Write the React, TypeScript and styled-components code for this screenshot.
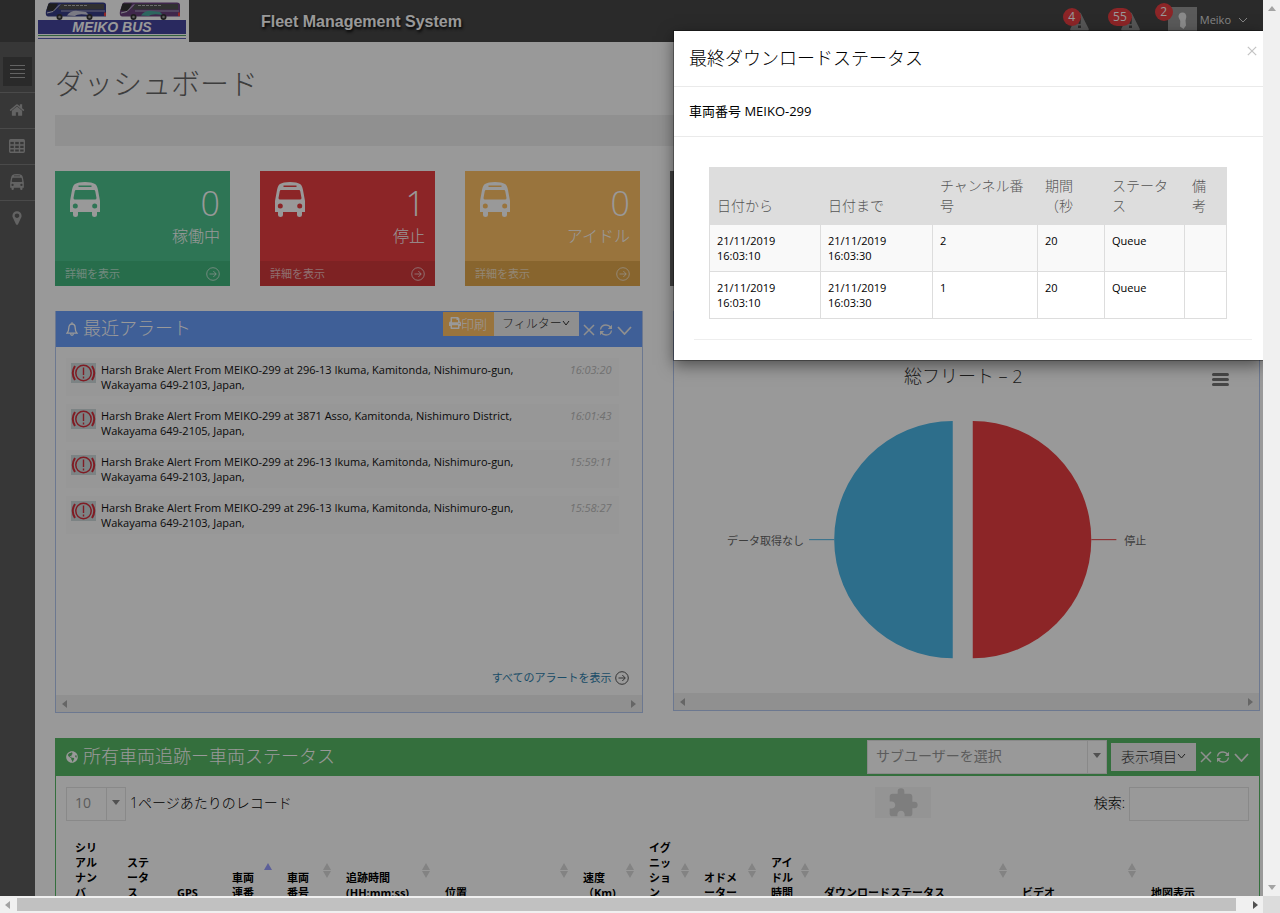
import React from "react";
import styled, { createGlobalStyle } from "styled-components";
import { FaGlobeAmericas, FaPrint } from "react-icons/fa";
import { MdExtension } from "react-icons/md";

const GlobalStyle = createGlobalStyle`
  * { box-sizing: border-box; }
  body {
    margin: 0;
    background: #fff;
    color: #000;
    font-family: "Open Sans", "Noto Sans CJK JP", sans-serif;
    font-size: 11px;
    line-height: 15px;
  }
  button, input, select { font-family: inherit; margin: 0; border-radius: 0; }
  svg { display: block; flex: none; }
  a { text-decoration: none; }
`;

/* ---------- window frame ---------- */

const Frame = styled.div`
  display: grid;
  grid-template: minmax(0, 1fr) 17px / minmax(0, 1fr) 17px;
  height: 100vh;
`;

const Viewport = styled.div`
  position: relative;
  overflow: hidden;
`;

const Track = styled.div<{ $vertical?: boolean }>`
  display: flex;
  flex-direction: ${(p) => (p.$vertical ? "column" : "row")};
  justify-content: space-between;
  align-items: center;
  padding: ${(p) => (p.$vertical ? "6px 0" : "0 5px")};
  background: #f0f0f0;
`;

const Thumb = styled.div`
  flex: 1;
  height: 13px;
  margin: 0 17px 0 7px;
  background: #c1c1c1;
`;

const Corner = styled.div`
  background: #dcdcdc;
`;

const shapes = {
  up: "M0 5L4 0L8 5Z",
  down: "M0 0L4 5L8 0Z",
  left: "M5 0L0 4L5 8Z",
  right: "M0 0L5 4L0 8Z",
};

function Arrow({ dir, color }: { dir: keyof typeof shapes; color: string }) {
  const wide = dir === "up" || dir === "down";
  return (
    <svg width={wide ? 8 : 5} height={wide ? 5 : 8} fill={color} aria-hidden="true">
      <path d={shapes[dir]} />
    </svg>
  );
}

/* ---------- top bar ---------- */

const TopBar = styled.header`
  display: flex;
  height: 42px;
  padding-left: 35px;
  background: #464646;
`;

const LogoBox = styled.div`
  width: 154px;
  height: 42px;
  background: #fff;
`;

const AppName = styled.div`
  margin-left: 72px;
  color: #fff;
  font: bold 16px/44px "Liberation Sans", Arial, sans-serif;
  text-shadow: 1px 2px 3px #000;
`;

const UserTools = styled.div`
  display: flex;
  align-items: flex-start;
  margin-left: auto;
  padding-right: 15px;
`;

const Notice = styled.a<{ $gap: number }>`
  position: relative;
  margin: 12px ${(p) => p.$gap}px 0 0;
`;

const Badge = styled.span<{ $user?: boolean }>`
  position: absolute;
  top: -4px;
  ${(p) => (p.$user ? "left: -13px;" : "right: 8px;")}
  min-width: 18px;
  padding: 0 5px;
  border-radius: 9px;
  background: #e93e41;
  color: #fff;
  font-size: 12px;
  line-height: 18px;
  text-align: center;
`;

const User = styled.a`
  position: relative;
  display: flex;
  align-items: center;
  gap: 3px;
  margin-top: 7px;
  height: 25px;
  color: #ddd;
  font-size: 11px;
`;

const UserName = styled.span`
  margin-right: 4px;
`;

/* ---------- sidebar ---------- */

const Body = styled.div`
  display: flex;
  align-items: stretch;
`;

const SideBar = styled.nav`
  flex: none;
  width: 35px;
  min-height: 900px;
  padding-top: 15px;
  background: #5d5d5d;
`;

const Toggle = styled.button`
  display: flex;
  align-items: center;
  justify-content: center;
  width: 29px;
  height: 29px;
  margin: 0 3px 6px;
  padding: 0;
  border: 0;
  background: #464646;
`;

const SideLink = styled.a`
  display: flex;
  align-items: center;
  justify-content: center;
  height: 36px;
  padding: 0 1px 1px 0;
  border-top: 1px solid #7c7c7c;
  color: #a5a5a5;
`;

/* ---------- content ---------- */

const Main = styled.main`
  flex: 1;
  min-width: 0;
  padding: 22px 3px 0 20px;
`;

const PageTitle = styled.h1`
  margin: 0 0 11px;
  color: #666;
  font-size: 29px;
  font-weight: 300;
  line-height: 40px;
`;

const Breadcrumb = styled.div`
  height: 31px;
  margin-bottom: 25px;
  background: #f1f1f1;
`;

const Stats = styled.section`
  display: grid;
  grid-template-columns: repeat(4, 175px);
  gap: 30px;
  margin-bottom: 25px;
`;

const StatCard = styled.article<{ $color: string }>`
  display: flex;
  flex-direction: column;
  height: 115px;
  background: ${(p) => p.$color};
  color: #fff;
`;

const StatTop = styled.div`
  display: flex;
  flex: 1;
  justify-content: space-between;
  padding: 11px 10px 0 15px;
`;

const StatText = styled.div`
  text-align: right;
  font-size: 16px;
  font-weight: 300;
  line-height: 22px;
`;

const StatValue = styled.div`
  padding: 1px 0 2px;
  font-size: 34px;
  line-height: 40px;
`;

const StatLink = styled.a<{ $color: string }>`
  display: flex;
  align-items: center;
  justify-content: space-between;
  height: 25px;
  padding: 0 10px;
  background: ${(p) => p.$color};
  color: rgba(255, 255, 255, 0.65);
`;

const Panels = styled.div`
  display: grid;
  grid-template-columns: 1fr 1fr;
  align-items: start;
  gap: 30px;
  margin-bottom: 25px;
`;

const Panel = styled.section<{ $color: string }>`
  display: flex;
  flex-direction: column;
  border: 1px solid ${(p) => p.$color};
  border-top: 0;
`;

const PanelHead = styled.header<{ $color: string; $tall?: boolean }>`
  display: flex;
  align-items: center;
  height: ${(p) => (p.$tall ? 38 : 36)}px;
  padding: 0 10px;
  background: ${(p) => p.$color};
  color: #fff;
`;

const PanelTitle = styled.h2`
  flex: 1;
  margin: 0 0 0 5px;
  padding-bottom: 2px;
  font-size: 18px;
  font-weight: 300;
  line-height: 26px;
`;

const HeadButton = styled.button<{ $amber?: boolean; $large?: boolean }>`
  display: flex;
  align-items: center;
  justify-content: center;
  align-self: ${(p) => (p.$large ? "center" : "flex-start")};
  width: ${(p) => (p.$amber ? 51 : 85)}px;
  height: ${(p) => (p.$large ? 28 : 24)}px;
  margin-top: ${(p) => (p.$large ? 0 : 1)}px;
  padding: 0 0 2px;
  border: 0;
  background: ${(p) => (p.$amber ? "#ffc166" : "#eee")};
  color: ${(p) => (p.$amber ? "#fff" : "#333")};
  font-size: ${(p) => (p.$large ? 14 : p.$amber ? 13 : 12)}px;
  font-weight: 300;
`;

const Tools = styled.div<{ $low?: boolean }>`
  display: flex;
  align-items: center;
  gap: 4px;
  margin: ${(p) => (p.$low ? 2 : 0)}px 0 0 4px;
`;

const ToolButton = styled.button`
  padding: 0;
  border: 0;
  background: none;
  color: #eee;
`;

const Strip = styled.div`
  display: flex;
  align-items: center;
  justify-content: space-between;
  height: 17px;
  padding: 0 6px;
  background: #f1f1f1;
`;

const AlertList = styled.ul`
  display: grid;
  gap: 8px;
  margin: 0;
  padding: 11px 23px 0 10px;
  height: 308px;
  align-content: start;
  list-style: none;
`;

const AlertRow = styled.li`
  display: grid;
  grid-template-columns: 25px minmax(0, 425px) 1fr;
  column-gap: 5px;
  padding: 4px 7px 4px 5px;
  background: #fcfcfc;
`;

const Message = styled.div`
  color: #111;
`;

const Time = styled.time`
  color: #bbb;
  font-style: italic;
  text-align: right;
`;

const MoreLink = styled.a`
  display: flex;
  align-items: center;
  justify-content: flex-end;
  gap: 3px;
  height: 40px;
  padding: 5px 13px 0 0;
  color: #2f81ad;
`;

const Chart = styled.svg`
  width: 100%;
  font-family: "Open Sans", "Noto Sans CJK JP", sans-serif;
`;

/* ---------- fleet table ---------- */

const SelectBox = styled.div<{ $width: number }>`
  position: relative;
  width: ${(p) => p.$width}px;
  height: 34px;
  border: 1px solid #e5e5e5;
  background: #fff;
`;

const Select = styled.select`
  appearance: none;
  width: 100%;
  height: 32px;
  padding: 0 8px 3px;
  border: 0;
  background: none;
  color: #999;
  font-size: 14px;
`;

const SelectArrow = styled.span`
  position: absolute;
  inset: 0 0 0 auto;
  display: flex;
  justify-content: center;
  width: 19px;
  padding-top: 12px;
  border-left: 1px solid #e5e5e5;
  pointer-events: none;
`;

const Controls = styled.div`
  display: flex;
  align-items: flex-start;
  justify-content: space-between;
  padding: 11px 10px;
  font-size: 14px;
  font-weight: 300;
`;

const Field = styled.div`
  display: flex;
  align-items: center;
  gap: 4px;

  label { padding-bottom: 4px; }
`;

const Plugin = styled.div`
  display: flex;
  align-items: center;
  justify-content: center;
  width: 56px;
  height: 31px;
  margin: 0 163px 0 auto;
  background: #f7f7f7;
  color: #d2d2d2;
`;

const SearchInput = styled.input`
  width: 120px;
  height: 34px;
  border: 1px solid #e5e5e5;
  background: #fff;
`;

const FleetTable = styled.table`
  width: calc(100% - 19px);
  margin-left: 9px;
  border-collapse: collapse;
  table-layout: fixed;
`;

const FleetHead = styled.th<{ $width: number }>`
  position: relative;
  width: ${(p) => p.$width}px;
  padding: 8px 0 8px 10px;
  text-align: left;
  vertical-align: bottom;
  font-weight: 700;
  white-space: nowrap;
`;

const SortMark = styled.svg`
  position: absolute;
  top: calc(50% - 7px);
  right: 5px;
`;

/* ---------- modal ---------- */

const Overlay = styled.div`
  position: absolute;
  inset: 0;
  background: rgba(0, 0, 0, 0.4);
`;

const Modal = styled.div`
  position: absolute;
  top: 31px;
  right: 0;
  width: 589px;
  background: #fff;
  box-shadow: 0 5px 15px rgba(0, 0, 0, 0.5), 0 0 0 1px rgba(0, 0, 0, 0.3);
`;

const ModalHead = styled.header`
  display: flex;
  align-items: flex-start;
  justify-content: space-between;
  height: 56px;
  padding: 14px 6px 0 15px;
  border-bottom: 1px solid #eaeaea;
`;

const ModalTitle = styled.h3`
  margin: 0;
  font-size: 18px;
  font-weight: 300;
  line-height: 26px;
`;

const Close = styled.button`
  padding: 1px 0 0;
  border: 0;
  background: none;
`;

const Vehicle = styled.div`
  padding: 14px 15px 15px;
  border-bottom: 1px solid #eaeaea;
  font-size: 13px;
  line-height: 20px;
`;

const ModalBody = styled.div`
  padding: 30px 11px 20px 20px;
`;

const LogTable = styled.table`
  width: 518px;
  margin: 0 0 20px 15px;
  border-collapse: collapse;
  table-layout: fixed;

  th, td {
    padding: 8px 8px 8px 7px;
    border: 1px solid #ddd;
    text-align: left;
    vertical-align: top;
  }
  th {
    background: #ddd;
    color: #555;
    font-size: 14px;
    font-weight: 300;
    line-height: 20px;
    vertical-align: bottom;
  }
  tbody tr:first-child { background: #f9f9f9; }
`;

const Rule = styled.hr`
  margin: 0;
  border: 0;
  border-top: 1px solid #eee;
`;

/* ---------- icons ---------- */

function Bus({ width, height }: { width: number; height: number }) {
  return (
    <svg width={width} height={height} viewBox="0 0 30 35" fill="currentColor" fillRule="evenodd" aria-hidden="true">
      <path d="M5 2Q8 0 15 0T25 2Q27 3 28 8L30 19V30H27V33Q27 35 24.500 35T22 33V30H8V33Q8 35 5.500 35T3 33V30H0V19L2 8Q3 3 5 2ZM8.500 3.500V5H21.500V3.500ZM6 8Q5 8 4.800 9L3.500 16Q3.500 17.500 5 17.500H25Q26.500 17.500 26.500 16L25.200 9Q25 8 24 8ZM5.300 21.500A2.500 2.500 0 1 0 5.300 26.500A2.500 2.500 0 1 0 5.300 21.500ZM24.700 21.500A2.500 2.500 0 1 0 24.700 26.500A2.500 2.500 0 1 0 24.700 21.500Z" />
    </svg>
  );
}

const Home = () => (
  <svg width="16" height="16" viewBox="0 0 1792 1792" fill="currentColor" aria-hidden="true">
    <path d="M1472 992v480q0 26-19 45t-45 19h-384v-384h-256v384h-384q-26 0-45-19t-19-45v-480q0-1 .5-3t.5-3l575-474 575 474q1 2 1 6zm223-69l-62 74q-8 9-21 11h-3q-13 0-21-7l-692-577-692 577q-12 8-24 7-13-2-21-11l-62-74q-8-10-7-23.500t11-21.500l719-599q32-26 76-26t76 26l244 204v-195q0-14 9-23t23-9h192q14 0 23 9t9 23v408l219 182q10 8 11 21.500t-7 23.500z" />
  </svg>
);

const Grid = () => (
  <svg width="16" height="14" viewBox="0 0 16 14" fill="none" stroke="currentColor" aria-hidden="true">
    <rect x="0.700" y="0.700" width="14.600" height="12.600" rx="1" strokeWidth="1.400" />
    <path d="M1 1.700H15" strokeWidth="2.400" />
    <path d="M1 6H15M1 9.700H15M5.500 2V13M10.500 2V13" strokeWidth="1.400" />
  </svg>
);

const Marker = () => (
  <svg width="16" height="16" viewBox="0 0 1792 1792" fill="currentColor" aria-hidden="true">
    <path d="M1152 640q0-106-75-181t-181-75-181 75-75 181 75 181 181 75 181-75 75-181zm256 0q0 109-33 179l-364 774q-16 33-47.500 52t-67.500 19-67.500-19-46.500-52l-365-774q-33-70-33-179 0-212 150-362t362-150 362 150 150 362z" />
  </svg>
);

const Warning = () => (
  <svg width="19" height="19" viewBox="0 0 19 19" aria-hidden="true">
    <path d="M9.500 0.500Q10.500 0.500 11 1.500L18.800 17Q19 18.500 18 18.500H1Q0 18.500 0.200 17L8 1.500Q8.500 0.500 9.500 0.500Z" fill="#8f8f8f" />
    <path d="M8 6H11L10.500 12H8.500ZM8 13.500H11V16H8Z" fill="#464646" />
  </svg>
);

const Avatar = () => (
  <svg width="29" height="25" viewBox="0 0 29 25" aria-hidden="true">
    <rect width="29" height="25" fill="#969696" />
    <path d="M14.500 5.500C17 5.500 18.500 7.500 18.300 10L17.500 13.500L18 18.500L15.500 22L12 19.500L12.300 14L10.500 10C10.300 7.500 12 5.500 14.500 5.500Z" fill="#e6e6e6" />
  </svg>
);

function CircleArrow({ color = "currentColor" }: { color?: string }) {
  return (
    <svg width="14" height="14" viewBox="0 0 14 14" fill="none" stroke={color} aria-hidden="true">
      <circle cx="7" cy="7" r="6.300" />
      <path d="M3.500 7H10M7.300 4L10.300 7L7.300 10" />
    </svg>
  );
}

function Chevron({ w, h, sw = 1.5 }: { w: number; h: number; sw?: number }) {
  return (
    <svg width={w} height={h} viewBox={`0 0 ${w} ${h}`} fill="none" stroke="currentColor" strokeWidth={sw} aria-hidden="true">
      <path d={`M1 1L${w / 2} ${h - 1}L${w - 1} 1`} />
    </svg>
  );
}

function Cross({ size, color = "currentColor" }: { size: number; color?: string }) {
  return (
    <svg width={size} height={size} viewBox="0 0 12 12" fill="none" stroke={color} strokeWidth="1.500" aria-hidden="true">
      <path d="M1 1L11 11M11 1L1 11" />
    </svg>
  );
}

const Refresh = () => (
  <svg width="14" height="12" viewBox="0 0 14 12" fill="none" stroke="currentColor" strokeWidth="1.300" aria-hidden="true">
    <path d="M1.500 5.500C2 2.500 4 1 7 1C9 1 10.500 1.700 11.800 3.500M12.500 6.500C12 9.500 10 11 7 11C5 11 3.500 10.300 2.200 8.500" />
    <path d="M13 0.800V5H8.800ZM1 11.200V7H5.200Z" fill="currentColor" stroke="none" />
  </svg>
);

const Bell = () => (
  <svg width="12" height="14" viewBox="0 0 12 14" fill="none" stroke="currentColor" strokeWidth="1.300" aria-hidden="true">
    <path d="M1 11.200C2.500 9.500 2.800 8 2.800 6C2.800 3.500 4 2 6 2S9.200 3.500 9.200 6C9.200 8 9.500 9.500 11 11.200ZM6 0.300V2" />
    <path d="M4.500 11.500Q4.800 13.300 6 13.300T7.500 11.500" />
  </svg>
);

const Brake = () => (
  <svg width="25" height="21" viewBox="0 -1 25 21" fill="none" stroke="#d5303c" aria-hidden="true">
    <rect width="25" height="20" fill="#cfdadd" stroke="none" />
    <circle cx="12.500" cy="10" r="7.700" strokeWidth="1.500" />
    <path d="M12.500 4.500V12M12.500 13.500V15.500" strokeWidth="1.400" />
    <path d="M4 3Q-0.500 10 4 17M21 3Q25.500 10 21 17" strokeWidth="2" />
  </svg>
);

function LogoBus({ x, body, accent }: { x: number; body: string; accent: string }) {
  return (
    <g transform={`translate(${x} 2)`}>
      <path d="M5 0.500H58Q61 0.500 61 3V14.500H3Q0 14 1 9L3 3Q4 0.500 5 0.500Z" fill={body} />
      <path d="M3.500 1.500L1.500 8.500L9 9L13 1.500Z" fill="#333" />
      <path d="M16 2H59V7.500H13Z" fill="#525252" />
      <path d="M19 3.500H42" stroke="#b5b5b5" strokeDasharray="3 1" />
      <path d="M2 11L8 9.500L15 2.500" fill="none" stroke="#d8d8e2" />
      <path d="M16 9H60" stroke="#a5a5c0" />
      <path d="M22 13.500Q26 8 33 9L41 10L44 13Q33 11 30 14Z" fill={accent} />
      <circle cx="14.500" cy="15" r="3" fill="#333" />
      <circle cx="44.500" cy="15" r="3" fill="#333" />
      <circle cx="14.500" cy="15" r="1.300" fill="#999" />
      <circle cx="44.500" cy="15" r="1.300" fill="#999" />
      <path d="M59 10.500H61V14H59Z" fill="#f04040" />
    </g>
  );
}

const Logo = () => (
  <svg width="154" height="42" viewBox="0 0 154 42" role="img" aria-label="Meiko Bus">
    <LogoBus x={10} body="#363c88" accent="#ccd" />
    <LogoBus x={84} body="#6a417e" accent="#4bab9e" />
    <rect x="3" y="20" width="148" height="14" fill="#45459e" />
    <text x="77" y="32" textAnchor="middle" fill="#fff" fontFamily='"Liberation Sans", sans-serif' fontSize="14" fontWeight="bold" fontStyle="italic">MEIKO BUS</text>
    <path d="M3 35.500H151" stroke="#55a568" />
    <path d="M3 38.500H151" stroke="#5c5cb4" />
  </svg>
);

/* ---------- data ---------- */

const stats = [
  { value: "0", label: "稼働中", color: "#4dc38e", foot: "#41b67d" },
  { value: "1", label: "停止", color: "#e93e41", foot: "#d2393b" },
  { value: "0", label: "アイドル", color: "#ffc166", foot: "#e3a84d" },
];

const alerts = [
  { place: "296-13 Ikuma, Kamitonda, Nishimuro-gun, Wakayama 649-2103, Japan,", time: "16:03:20" },
  { place: "3871 Asso, Kamitonda, Nishimuro District, Wakayama 649-2105, Japan,", time: "16:01:43" },
  { place: "296-13 Ikuma, Kamitonda, Nishimuro-gun, Wakayama 649-2103, Japan,", time: "15:59:11" },
  { place: "296-13 Ikuma, Kamitonda, Nishimuro-gun, Wakayama 649-2103, Japan,", time: "15:58:27" },
];

type Sort = "none" | "asc" | "both";

const columns: { lines: string[]; width: number; sort: Sort }[] = [
  { lines: ["シリ", "アル", "ナン", "バ"], width: 52, sort: "none" },
  { lines: ["ステ", "ータ", "ス"], width: 50, sort: "none" },
  { lines: ["GPS"], width: 55, sort: "none" },
  { lines: ["車両", "連番"], width: 55, sort: "asc" },
  { lines: ["車両", "番号"], width: 59, sort: "both" },
  { lines: ["追跡時間", "(HH:mm:ss)"], width: 99, sort: "both" },
  { lines: ["位置"], width: 138, sort: "both" },
  { lines: ["速度", "（Km)"], width: 66, sort: "both" },
  { lines: ["イグ", "ニッ", "ショ", "ン"], width: 55, sort: "both" },
  { lines: ["オドメ", "ーター"], width: 67, sort: "both" },
  { lines: ["アイ", "ドル", "時間"], width: 53, sort: "both" },
  { lines: ["ダウンロードステータス"], width: 198, sort: "both" },
  { lines: ["ビデオ"], width: 129, sort: "both" },
  { lines: ["地図表示"], width: 108, sort: "none" },
];

const logColumns = [
  { label: "日付から", width: 111 },
  { label: "日付まで", width: 112 },
  { label: "チャンネル番号", width: 105 },
  { label: "期間（秒", width: 67 },
  { label: "ステータス", width: 80 },
  { label: "備考", width: 42 },
];

const logRows = [
  ["21/11/2019 16:03:10", "21/11/2019 16:03:30", "2", "20", "Queue", ""],
  ["21/11/2019 16:03:10", "21/11/2019 16:03:30", "1", "20", "Queue", ""],
];

/* ---------- parts ---------- */

function PanelTools({ low }: { low?: boolean }) {
  return (
    <Tools $low={low}>
      <ToolButton aria-label="閉じる"><Cross size={12} /></ToolButton>
      <ToolButton aria-label="更新"><Refresh /></ToolButton>
      <ToolButton aria-label="折りたたむ"><Chevron w={15} h={9} sw={1.8} /></ToolButton>
    </Tools>
  );
}

function ScrollStrip() {
  return (
    <Strip>
      <Arrow dir="left" color="#aaa" />
      <Arrow dir="right" color="#aaa" />
    </Strip>
  );
}

function FleetChart() {
  return (
    <Chart viewBox="0 -1 585 346">
      <text x="289" y="35" textAnchor="middle" fontSize="18" fontWeight="300" fill="#333">総フリート – 2</text>
      <path d="M539 26.500H553M539 31.500H553M539 36.500H553" stroke="#777" strokeWidth="3" strokeLinecap="round" />
      <path d="M278.500 73A118.500 118.500 0 0 0 278.500 310Z" fill="#4bb7e8" />
      <path d="M298.500 73A118.500 118.500 0 0 1 298.500 310Z" fill="#e93e41" />
      <path d="M135 191.500H160" stroke="#4bb7e8" />
      <path d="M417 191.500H442" stroke="#e93e41" />
      <text x="130" y="197" textAnchor="end" fontSize="11" fill="#666">データ取得なし</text>
      <text x="450" y="197" fontSize="11" fill="#666">停止</text>
    </Chart>
  );
}

export default function App() {
  return (
    <>
      <GlobalStyle />
      <Frame>
        <Viewport>
          <TopBar>
            <LogoBox><Logo /></LogoBox>
            <AppName>Fleet Management System</AppName>
            <UserTools>
              <Notice href="#alerts" $gap={32}><Warning /><Badge>4</Badge></Notice>
              <Notice href="#warnings" $gap={28}><Warning /><Badge>55</Badge></Notice>
              <User href="#user">
                <Avatar />
                <Badge $user>2</Badge>
                <UserName>Meiko</UserName>
                <Chevron w={10} h={6} sw={1} />
              </User>
            </UserTools>
          </TopBar>

          <Body>
            <SideBar>
              <Toggle aria-label="メニュー">
                <svg width="15" height="13" stroke="#a5a5a5" aria-hidden="true">
                  <path d="M0 0.500H15M0 4.500H15M0 8.500H15M0 12.500H15" />
                </svg>
              </Toggle>
              <SideLink href="#home" aria-label="ホーム"><Home /></SideLink>
              <SideLink href="#list" aria-label="一覧"><Grid /></SideLink>
              <SideLink href="#bus" aria-label="車両"><Bus width={14} height={16} /></SideLink>
              <SideLink href="#map" aria-label="地図"><Marker /></SideLink>
            </SideBar>

            <Main>
              <PageTitle>ダッシュボード</PageTitle>
              <Breadcrumb />

              <Stats>
                {stats.map((s) => (
                  <StatCard key={s.label} $color={s.color}>
                    <StatTop>
                      <Bus width={30} height={35} />
                      <StatText>
                        <StatValue>{s.value}</StatValue>
                        {s.label}
                      </StatText>
                    </StatTop>
                    <StatLink href="#detail" $color={s.foot}>
                      詳細を表示
                      <CircleArrow />
                    </StatLink>
                  </StatCard>
                ))}
                <StatCard $color="#6d6d6d" />
              </Stats>

              <Panels>
                <Panel $color="#b4c8f0">
                  <PanelHead $color="#699efc">
                    <Bell />
                    <PanelTitle>最近アラート</PanelTitle>
                    <HeadButton $amber><FaPrint size={12} />印刷</HeadButton>
                    <HeadButton>フィルター<Chevron w={8} h={6} sw={1} /></HeadButton>
                    <PanelTools low />
                  </PanelHead>
                  <AlertList>
                    {alerts.map((a) => (
                      <AlertRow key={a.time}>
                        <Brake />
                        <Message>Harsh Brake Alert From MEIKO-299 at {a.place}</Message>
                        <Time>{a.time}</Time>
                      </AlertRow>
                    ))}
                  </AlertList>
                  <MoreLink href="#all">
                    すべてのアラートを表示
                    <CircleArrow color="#555" />
                  </MoreLink>
                  <ScrollStrip />
                </Panel>

                <Panel $color="#b4c8f0">
                  <PanelHead $color="#699efc" />
                  <FleetChart />
                  <ScrollStrip />
                </Panel>
              </Panels>

              <Panel $color="#58b966">
                <PanelHead $color="#58b966" $tall>
                  <FaGlobeAmericas size={12} />
                  <PanelTitle>所有車両追跡ー車両ステータス</PanelTitle>
                  <SelectBox $width={240}>
                    <Select aria-label="サブユーザー">
                      <option>サブユーザーを選択</option>
                    </Select>
                    <SelectArrow><Arrow dir="down" color="#888" /></SelectArrow>
                  </SelectBox>
                  <Tools>
                    <HeadButton $large>表示項目<Chevron w={9} h={6} sw={1} /></HeadButton>
                  </Tools>
                  <PanelTools />
                </PanelHead>

                <Controls>
                  <Field>
                    <SelectBox $width={60}>
                      <Select id="page-size">
                        <option>10</option>
                      </Select>
                      <SelectArrow><Arrow dir="down" color="#888" /></SelectArrow>
                    </SelectBox>
                    <label htmlFor="page-size">1ページあたりのレコード</label>
                  </Field>
                  <Plugin><MdExtension size={32} /></Plugin>
                  <Field>
                    <label htmlFor="search">検索:</label>
                    <SearchInput id="search" type="text" />
                  </Field>
                </Controls>

                <FleetTable>
                  <thead>
                    <tr>
                      {columns.map((c) => (
                        <FleetHead key={c.lines.join("")} $width={c.width}>
                          {c.lines.map((line, i) => (
                            <React.Fragment key={i}>
                              {i > 0 && <br />}
                              {line}
                            </React.Fragment>
                          ))}
                          {c.sort !== "none" && (
                            <SortMark width="8" height="15" aria-hidden="true">
                              <path d="M0 7L4 0L8 7Z" fill={c.sort === "asc" ? "#999eff" : "#dadada"} />
                              {c.sort === "both" && <path d="M0 8L4 15L8 8Z" fill="#dadada" />}
                            </SortMark>
                          )}
                        </FleetHead>
                      ))}
                    </tr>
                  </thead>
                </FleetTable>
              </Panel>
            </Main>
          </Body>

          <Overlay />
          <Modal role="dialog" aria-labelledby="modal-title">
            <ModalHead>
              <ModalTitle id="modal-title">最終ダウンロードステータス</ModalTitle>
              <Close aria-label="閉じる"><Cross size={10} color="#c4c4c4" /></Close>
            </ModalHead>
            <Vehicle>車両番号 MEIKO-299</Vehicle>
            <ModalBody>
              <LogTable>
                <colgroup>
                  {logColumns.map((c) => (
                    <col key={c.label} width={c.width} />
                  ))}
                </colgroup>
                <thead>
                  <tr>
                    {logColumns.map((c) => (
                      <th key={c.label}>{c.label}</th>
                    ))}
                  </tr>
                </thead>
                <tbody>
                  {logRows.map((row, i) => (
                    <tr key={i}>
                      {row.map((cell, j) => (
                        <td key={j}>{cell}</td>
                      ))}
                    </tr>
                  ))}
                </tbody>
              </LogTable>
              <Rule />
            </ModalBody>
          </Modal>
        </Viewport>

        <Track $vertical>
          <Arrow dir="up" color="#a3a3a3" />
          <Arrow dir="down" color="#a3a3a3" />
        </Track>
        <Track>
          <Arrow dir="left" color="#a3a3a3" />
          <Thumb />
          <Arrow dir="right" color="#505050" />
        </Track>
        <Corner />
      </Frame>
    </>
  );
}
